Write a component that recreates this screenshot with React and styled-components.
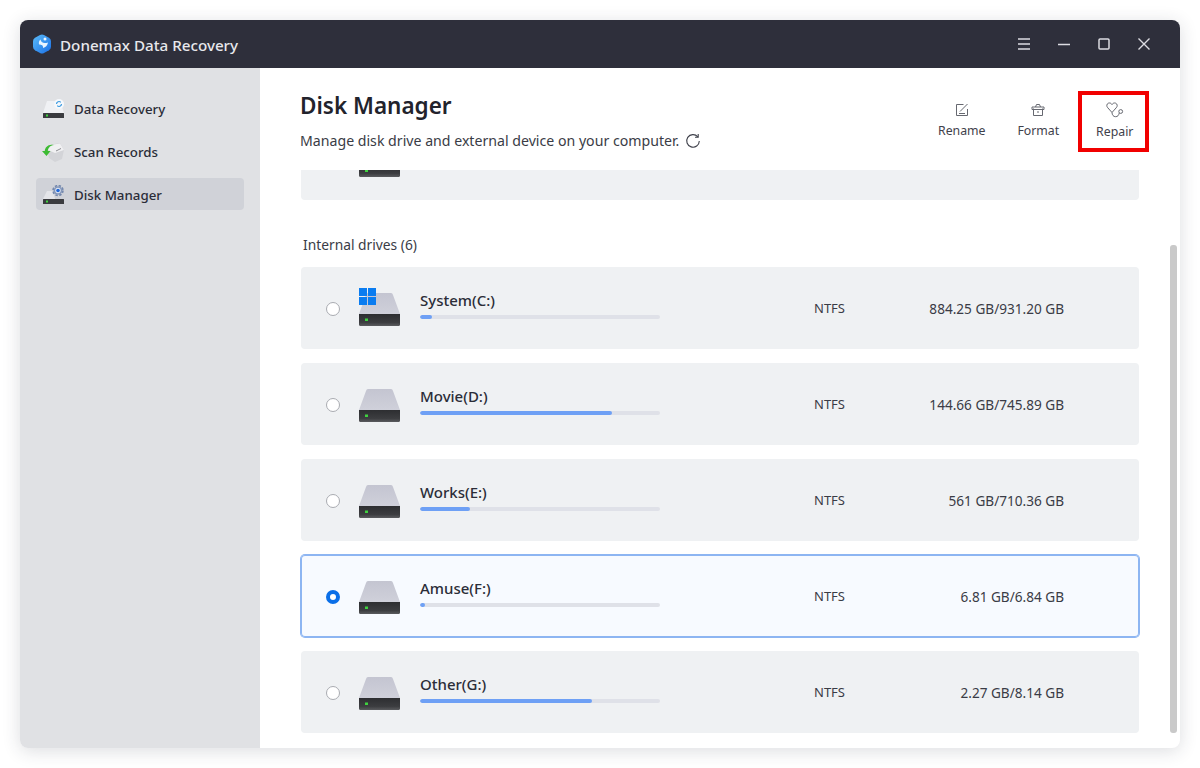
import React from "react";
import styled, { createGlobalStyle } from "styled-components";

const drives = [
  { name: "System(C:)", used: 5, size: "884.25 GB/931.20 GB", windows: true },
  { name: "Movie(D:)", used: 80, size: "144.66 GB/745.89 GB" },
  { name: "Works(E:)", used: 21, size: "561 GB/710.36 GB" },
  { name: "Amuse(F:)", used: 2, size: "6.81 GB/6.84 GB", selected: true },
  { name: "Other(G:)", used: 71.5, size: "2.27 GB/8.14 GB" },
];

const GlobalStyle = createGlobalStyle`
  html, body {
    margin: 0;
    background: #fff;
  }
  body {
    font-family: "Noto Sans", "Open Sans", "Liberation Sans", sans-serif;
    color: #2b2d38;
  }
`;

const Page = styled.div`
  width: 1200px;
  height: 768px;
  padding: 20px;
  box-sizing: border-box;
  overflow: hidden;
`;

const Window = styled.div`
  height: 728px;
  display: flex;
  flex-direction: column;
  border-radius: 8px;
  overflow: hidden;
  background: #fff;
  box-shadow: 0 3px 18px rgba(40, 42, 60, 0.16);
`;

const TitleBar = styled.div`
  height: 48px;
  flex: none;
  display: flex;
  align-items: center;
  padding: 0 16px 0 13px;
  background: #2e2f3b;
`;

const AppName = styled.div`
  margin-left: 9px;
  padding-top: 2px;
  font-size: 15.2px;
  font-weight: 500;
  color: #e8e8ec;
`;

const WindowControls = styled.div`
  margin-left: auto;
  display: flex;
`;

const ControlButton = styled.div`
  width: 40px;
  height: 48px;
  display: flex;
  align-items: center;
  justify-content: center;
`;

const Body = styled.div`
  flex: 1;
  display: flex;
  min-height: 0;
`;

const Sidebar = styled.div`
  width: 240px;
  flex: none;
  box-sizing: border-box;
  padding: 24px 16px;
  display: flex;
  flex-direction: column;
  gap: 11px;
  background: #e0e1e4;
`;

const NavItem = styled.div`
  height: 32px;
  box-sizing: border-box;
  display: flex;
  align-items: center;
  gap: 8px;
  padding: 2px 0 0 6px;
  border-radius: 4px;
  font-size: 13.3px;
  font-weight: 500;
  background: ${(p) => (p.$active ? "#d0d2d8" : "transparent")};
`;

const Main = styled.div`
  position: relative;
  flex: 1;
  min-width: 0;
  display: flex;
  flex-direction: column;
`;

const Header = styled.div`
  height: 102px;
  flex: none;
  box-sizing: border-box;
  padding: 20px 27px 0 40px;
  display: flex;
  justify-content: space-between;
  align-items: flex-start;
`;

const Title = styled.h1`
  margin: 1px 0 0;
  font-size: 22.5px;
  line-height: 34px;
  font-weight: 600;
  color: #22232c;
`;

const Subtitle = styled.div`
  margin-top: 8px;
  display: flex;
  align-items: center;
  gap: 6px;
  font-size: 14.15px;
  line-height: 20px;
  color: #3a3c46;
`;

const Toolbar = styled.div`
  display: flex;
  margin-top: 3px;
`;

const ToolButton = styled.div`
  position: relative;
  width: 76.5px;
  height: 61px;
  display: flex;
  flex-direction: column;
  align-items: center;
  justify-content: center;
  gap: 5px;
  font-size: 12.3px;
  line-height: 18px;
  color: #3f414b;

  &::after {
    content: "";
    display: ${(p) => (p.$marked ? "block" : "none")};
    position: absolute;
    top: 0;
    bottom: 0;
    left: 1.5px;
    right: 4px;
    border: 4px solid #f10000;
  }
`;

const DriveList = styled.div`
  flex: 1;
  min-height: 0;
  overflow: hidden;
  padding: 0 41px;
`;

const ClippedCard = styled.div`
  height: 30px;
  padding-left: 58px;
  overflow: hidden;
  background: #eff1f3;
  border-radius: 0 0 4px 4px;
`;

const SectionLabel = styled.div`
  margin: 36px 0 13px 2px;
  font-size: 13.8px;
  line-height: 18px;
  color: #3a3c46;
`;

const Cards = styled.div`
  display: flex;
  flex-direction: column;
  gap: 14px;
`;

const Card = styled.div`
  height: 82px;
  box-sizing: border-box;
  display: flex;
  align-items: center;
  padding: 2px 75px 0 25px;
  border-radius: 4px;
  background: ${(p) => (p.$selected ? "#f7faff" : "#eff1f3")};
  box-shadow: ${(p) =>
    p.$selected ? "0 0 0 1px #8db5f2, inset 0 0 0 1px #8db5f2" : "none"};
`;

const Radio = styled.div`
  width: 14px;
  height: 14px;
  flex: none;
  box-sizing: border-box;
  border-radius: 50%;
  background: #fff;
  border: ${(p) => (p.$checked ? "4px solid #0b6fe8" : "1px solid #a9abb1")};
`;

const DriveWrap = styled.div`
  position: relative;
  width: 41px;
  height: 33px;
  flex: none;
  margin: ${(p) => p.$margin || "0 20px 0 19px"};
`;

const WindowsBadge = styled.svg`
  position: absolute;
  left: 0;
  top: -5px;
`;

const Info = styled.div`
  width: 240px;
  flex: none;
  padding-bottom: 9px;
`;

const DriveName = styled.div`
  font-size: 15px;
  line-height: 20px;
  font-weight: 500;
  color: #2b2d38;
`;

const Track = styled.div`
  height: 4px;
  margin-top: 5px;
  border-radius: 2px;
  overflow: hidden;
  background: #dfe1e8;
`;

const Fill = styled.div`
  height: 100%;
  border-radius: 2px;
  background: #6ea0f5;
`;

const FileSystem = styled.div`
  margin-left: 154px;
  padding-bottom: 2px;
  font-size: 13px;
  color: #3a3c46;
`;

const Size = styled.div`
  margin-left: auto;
  padding-bottom: 2px;
  font-size: 13.6px;
  color: #3a3c46;
`;

const ScrollThumb = styled.div`
  position: absolute;
  top: 177px;
  right: 3px;
  width: 7px;
  height: 488px;
  border-radius: 3px;
  background: #c9c9c9;
`;

const DriveIcon = () => (
  <svg width="41" height="33" viewBox="0 0 41 33">
    <defs>
      <linearGradient id="driveTop" x1="0" y1="0" x2="0" y2="1">
        <stop offset="0" stopColor="#c4c5d1" />
        <stop offset="1" stopColor="#cfd0da" />
      </linearGradient>
      <linearGradient id="driveBase" x1="0" y1="0" x2="0" y2="1">
        <stop offset="0" stopColor="#2d2e31" />
        <stop offset="0.7" stopColor="#3c3d40" />
        <stop offset="1" stopColor="#5a5b5e" />
      </linearGradient>
    </defs>
    <path d="M9 0H32Q33.500 0 34 2L41 21H0L7 2Q7.500 0 9 0Z" fill="url(#driveTop)" />
    <path d="M0 21H41V31.500Q41 33 39.500 33H1.500Q0 33 0 31.500Z" fill="url(#driveBase)" />
    <rect x="6" y="25.500" width="3" height="2.500" fill="#3fd23f" />
  </svg>
);

const SmallBase = ({ fill = "#e9eaee" }) => (
  <>
    <path d="M5 2H18L22 14H1Z" fill={fill} />
    <rect x="1" y="14" width="21" height="5" rx="0.500" fill="#3a3b3f" />
    <rect x="4" y="15.500" width="2" height="2" fill="#3fd23f" />
  </>
);

const RecoveryIcon = () => (
  <svg width="24" height="21" viewBox="0 0 24 21">
    <SmallBase fill="#f0f1f4" />
    <circle cx="17" cy="5" r="5" fill="#f5f8fc" />
    <path d="M14.500 5a2.500 2.500 0 0 1 4.300-1.700M19.500 5a2.500 2.500 0 0 1-4.300 1.700" fill="none" stroke="#3d9be0" strokeWidth="1.200" />
  </svg>
);

const RecordsIcon = () => (
  <svg width="24" height="21" viewBox="0 0 24 21">
    <path d="M9 2.500 18 1 22 8 20 17 13 20 7 16 5 8Z" fill="#d3d4d8" />
    <path d="M9 3 18 1.500 22 8 13 11 6 8Z" fill="#f0f0f2" />
    <path d="M14 9 19 6.500" stroke="#8c8d92" strokeWidth="1" />
    <path d="M12 3C8 3.500 6 6 5.800 9L8.500 9 4.500 14 0 9 2.800 9C3 5 6.500 1.500 12 3Z" fill="#3dbb33" />
  </svg>
);

const ManagerIcon = () => (
  <svg width="24" height="21" viewBox="0 0 24 21">
    <path d="M5 6H11L13 14H1Z" fill="#e4e5e9" />
    <rect x="1" y="14" width="21" height="5" rx="0.500" fill="#3a3b3f" />
    <rect x="4" y="15.500" width="2" height="2" fill="#3fd23f" />
    <circle cx="16" cy="5.500" r="4.900" fill="none" stroke="#7488ad" strokeWidth="1.700" strokeDasharray="2.400 1.450" />
    <circle cx="16" cy="5.500" r="4.300" fill="#8497ba" />
    <circle cx="16" cy="5.500" r="2.700" fill="#e3e9f4" />
    <circle cx="16" cy="5.500" r="1.800" fill="#2268d8" />
  </svg>
);

const AppLogo = () => (
  <svg width="18" height="20" viewBox="0 0 18 20">
    <defs>
      <linearGradient id="logoFill" x1="0" y1="0" x2="1" y2="1">
        <stop offset="0" stopColor="#5cbcf8" />
        <stop offset="1" stopColor="#1a6fe6" />
      </linearGradient>
    </defs>
    <path d="M7 1 Q9 0 11 1L16 3.800Q18 5 18 7.200V12.800Q18 15 16 16.200L11 19Q9 20 7 19L2 16.200Q0 15 0 12.800V7.200Q0 5 2 3.800Z" fill="url(#logoFill)" />
    <path d="M7.500 5.500C8 8.500 10.500 10 15 8.500 14.500 11.500 12.500 13.500 10 14 10.500 11.500 8.500 10.500 6 10.500 5.500 8.500 6 6.500 7.500 5.500Z" fill="#eaf5ff" />
    <circle cx="12" cy="5" r="1.500" fill="#eaf5ff" />
  </svg>
);

const MenuIcon = () => (
  <svg width="14" height="14" viewBox="0 0 14 14" stroke="#dcdce2" strokeWidth="1.400">
    <path d="M1 2H13M1 7H13M1 12H13" />
  </svg>
);

const MinimizeIcon = () => (
  <svg width="14" height="14" viewBox="0 0 14 14" stroke="#dcdce2" strokeWidth="1.400">
    <path d="M1 7.500H13" />
  </svg>
);

const MaximizeIcon = () => (
  <svg width="14" height="14" viewBox="0 0 14 14" fill="none" stroke="#dcdce2" strokeWidth="1.500">
    <rect x="2" y="2" width="10" height="10" rx="1" />
  </svg>
);

const CloseIcon = () => (
  <svg width="14" height="14" viewBox="0 0 14 14" stroke="#dcdce2" strokeWidth="1.400">
    <path d="M1.500 1.500 12.500 12.500M12.500 1.500 1.500 12.500" />
  </svg>
);

const RefreshIcon = () => (
  <svg width="16" height="16" viewBox="0 0 16 16" fill="none" stroke="#3f414b" strokeWidth="1.100">
    <path d="M12.800 3.800A6.300 6.300 0 1 0 14.300 8" />
    <path d="M13.200 1V4.200H10" />
  </svg>
);

const RenameIcon = () => (
  <svg width="14" height="14" viewBox="0 0 14 14" fill="none" stroke="#666870" strokeWidth="1">
    <path d="M8.500 1.500H1.500V12.500H12.500V6" />
    <path d="M5 8.500 12.500 1" />
    <path d="M4 10.500H10" />
  </svg>
);

const FormatIcon = () => (
  <svg width="14" height="14" viewBox="0 0 14 14" fill="none" stroke="#666870" strokeWidth="1">
    <path d="M2.500 5.500V12.500H11.500V5.500" />
    <path d="M1 4H13V6.500H1Z" />
    <path d="M4.500 4 5.500 1.500H8.500L9.500 4" />
    <path d="M6 9H8" />
  </svg>
);

const RepairIcon = () => (
  <svg width="18" height="16" viewBox="0 0 18 16" fill="none" stroke="#666870" strokeWidth="1">
    <path d="M6 10.500 1.800 5.800C0.300 4.300 0.500 2 2.300 1.200 3.800 0.600 5.200 1.200 6 2.600 6.800 1.200 8.200 0.600 9.700 1.200 11.500 2 11.700 4.300 10.200 5.800Z" />
    <path d="M6 10.500C6 13 7.500 14.700 9.500 14.700 11.800 14.700 12.500 13.500 13.300 11" />
    <circle cx="14.700" cy="9.500" r="1.900" />
  </svg>
);

const DiskGraphic = ({ margin, windows }) => (
  <DriveWrap $margin={margin}>
    <DriveIcon />
    {windows && (
      <WindowsBadge width="17" height="17" viewBox="0 0 17 17" fill="#0a7cf0">
        <rect width="8" height="8" />
        <rect x="9" width="8" height="8" />
        <rect y="9" width="8" height="8" />
        <rect x="9" y="9" width="8" height="8" />
      </WindowsBadge>
    )}
  </DriveWrap>
);

const DriveCard = ({ drive }) => (
  <Card $selected={drive.selected}>
    <Radio $checked={drive.selected} />
    <DiskGraphic windows={drive.windows} />
    <Info>
      <DriveName>{drive.name}</DriveName>
      <Track>
        <Fill style={{ width: `${drive.used}%` }} />
      </Track>
    </Info>
    <FileSystem>NTFS</FileSystem>
    <Size>{drive.size}</Size>
  </Card>
);

export default function App() {
  return (
    <Page>
      <GlobalStyle />
      <Window>
        <TitleBar>
          <AppLogo />
          <AppName>Donemax Data Recovery</AppName>
          <WindowControls>
            <ControlButton><MenuIcon /></ControlButton>
            <ControlButton><MinimizeIcon /></ControlButton>
            <ControlButton><MaximizeIcon /></ControlButton>
            <ControlButton><CloseIcon /></ControlButton>
          </WindowControls>
        </TitleBar>
        <Body>
          <Sidebar>
            <NavItem><RecoveryIcon />Data Recovery</NavItem>
            <NavItem><RecordsIcon />Scan Records</NavItem>
            <NavItem $active><ManagerIcon />Disk Manager</NavItem>
          </Sidebar>
          <Main>
            <Header>
              <div>
                <Title>Disk Manager</Title>
                <Subtitle>
                  Manage disk drive and external device on your computer.
                  <RefreshIcon />
                </Subtitle>
              </div>
              <Toolbar>
                <ToolButton><RenameIcon />Rename</ToolButton>
                <ToolButton><FormatIcon />Format</ToolButton>
                <ToolButton $marked><RepairIcon />Repair</ToolButton>
              </Toolbar>
            </Header>
            <DriveList>
              <ClippedCard>
                <DiskGraphic margin="-26px 0 0 0" />
              </ClippedCard>
              <SectionLabel>Internal drives (6)</SectionLabel>
              <Cards>
                {drives.map((drive) => (
                  <DriveCard key={drive.name} drive={drive} />
                ))}
              </Cards>
            </DriveList>
            <ScrollThumb />
          </Main>
        </Body>
      </Window>
    </Page>
  );
}
